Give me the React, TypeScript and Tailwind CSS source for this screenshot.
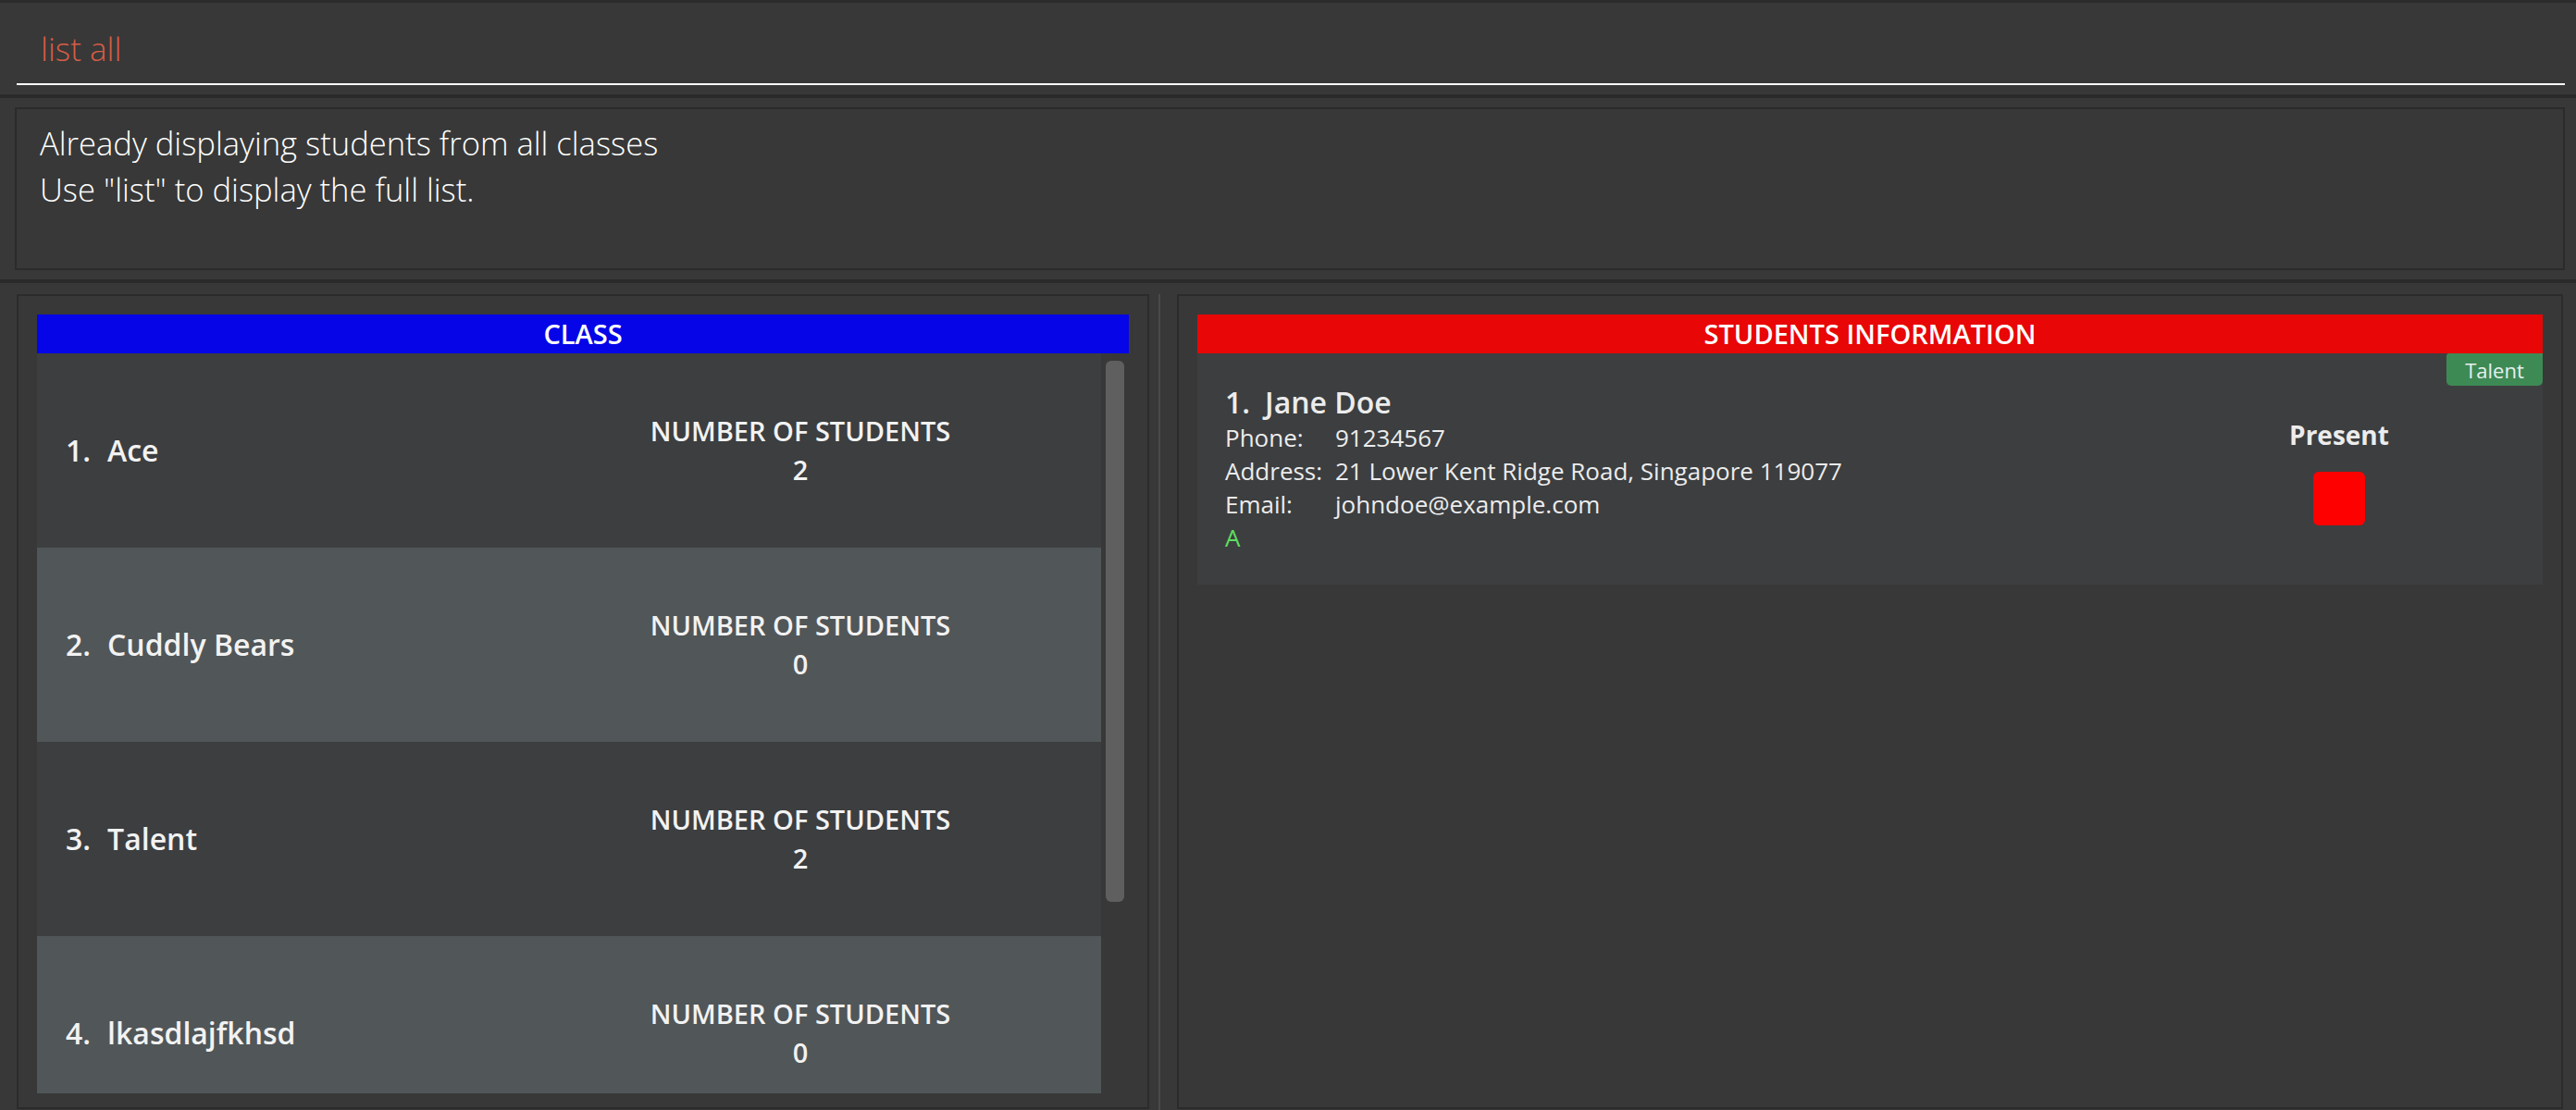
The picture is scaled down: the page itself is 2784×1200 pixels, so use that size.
const classes = [
  { name: "Ace", count: 2 },
  { name: "Cuddly Bears", count: 0 },
  { name: "Talent", count: 2 },
  { name: "lkasdlajfkhsd", count: 0 },
];

function ClassRow({ index, name, count }: { index: number; name: string; count: number }) {
  const bg = index % 2 === 0 ? "bg-[#3c3e40]" : "bg-[#515658]";
  return (
    <div className={`h-[210px] shrink-0 flex items-center pl-[31px] ${bg}`}>
      <div className="w-[594px] flex items-center text-[32px] font-semibold text-[#f2f2f2]">
        <span>{index + 1}.</span>
        <span className="ml-[18px]">{name}</span>
      </div>
      <div className="w-[400px] flex flex-col items-center text-[29px] font-semibold text-[#f2f2f2] leading-[42px]">
        <span>NUMBER OF STUDENTS</span>
        <span>{count}</span>
      </div>
    </div>
  );
}

export default function App() {
  return (
    <div
      className="w-[2784px] h-[1200px] bg-[#383838] flex flex-col overflow-hidden"
      style={{ fontFamily: '"Open Sans", "Noto Sans", sans-serif' }}
    >
      {/* command box */}
      <div className="h-[3px] bg-[#2b2b2b]" />
      <div className="h-[99px] pl-[18px] pr-[12px] flex flex-col">
        <div className="h-[87px] flex items-center pt-[12px] pl-[26px] text-[35px] font-light text-[#d65d45] leading-none">
          list all
        </div>
        <div className="h-[2px] bg-white" />
      </div>
      <div className="h-[4px] bg-[#2a2a2a]" />

      {/* result display */}
      <div className="h-[196px] pt-[10px] pl-[16px] pr-[12px]">
        <div className="h-[176px] border-2 border-[#2b2b2b] pl-[25px] pt-[12px] text-[34.6px] leading-[50px] font-light text-white">
          <div>Already displaying students from all classes</div>
          <div>Use "list" to display the full list.</div>
        </div>
      </div>
      <div className="h-[4px] bg-[#2a2a2a]" />

      {/* panels */}
      <div className="flex-1 flex pt-[12px]">
        <div className="ml-[18px] w-[1224px] h-[881px] border-2 border-[#2b2b2b] pt-[20px] pl-[20px] pr-[20px] pb-[15px] flex flex-col">
          <div className="h-[42px] bg-[#0505e8] flex items-center justify-center text-[29px] font-semibold text-white">
            CLASS
          </div>
          <div className="flex-1 flex overflow-hidden">
            <div className="w-[1150px] flex flex-col">
              {classes.map((c, i) => (
                <ClassRow key={c.name} index={i} name={c.name} count={c.count} />
              ))}
            </div>
            <div className="flex-1 flex justify-center pt-[8px]">
              <div className="w-[20px] h-[585px] rounded-[6px] bg-[#5f5f5f]" />
            </div>
          </div>
        </div>

        <div className="w-[30px] flex">
          <div className="ml-[10px] w-[2px] h-full bg-[#4a4a4a]" />
        </div>

        <div className="w-[1498px] h-[881px] border-2 border-[#2b2b2b] pt-[20px] px-[20px] flex flex-col">
          <div className="h-[42px] bg-[#e80606] flex items-center justify-center text-[29px] font-semibold text-white">
            STUDENTS INFORMATION
          </div>
          <div className="relative h-[250px] bg-[#3c3e40] flex">
            <div className="absolute top-0 right-0 w-[104px] h-[35px] rounded-b-[5px] rounded-tl-[3px] bg-[#3e8a55] flex items-center justify-center text-[22px] text-[#e8f0ee] leading-none">
              Talent
            </div>
            <div className="flex-1 pl-[30px] pt-[33px] text-[#ececec]">
              <div className="flex items-center h-[40px] text-[32px] font-semibold">
                <span>1.</span>
                <span className="ml-[16px]">Jane Doe</span>
              </div>
              <div className="text-[26px] leading-[36px]">
                <div className="flex">
                  <span className="w-[119px]">Phone:</span>
                  <span>91234567</span>
                </div>
                <div className="flex">
                  <span className="w-[119px]">Address:</span>
                  <span>21 Lower Kent Ridge Road, Singapore 119077</span>
                </div>
                <div className="flex">
                  <span className="w-[119px]">Email:</span>
                  <span>johndoe@example.com</span>
                </div>
                <div className="text-[#5fe05f]">A</div>
              </div>
            </div>
            <div className="w-[200px] mr-[120px] flex flex-col items-center pt-[70px]">
              <div className="text-[28px] leading-[36px] font-bold text-[#ececec]">Present</div>
              <div className="mt-[22px] w-[56px] h-[58px] rounded-[6px] bg-[#ff0000]" />
            </div>
          </div>
        </div>
      </div>
    </div>
  );
}
